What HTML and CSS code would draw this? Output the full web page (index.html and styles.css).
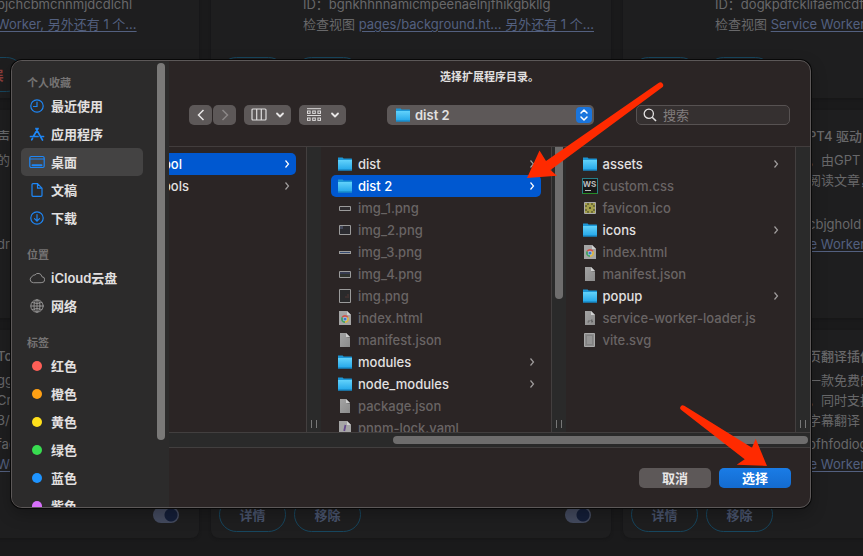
FILE: index.html
```html
<!DOCTYPE html>
<html lang="zh-CN">
<head>
<meta charset="utf-8">
<title>选择扩展程序目录</title>
<link rel="stylesheet" href="styles.css">
</head>
<body>
<svg class="defs" aria-hidden="true">
  <defs>
    <linearGradient id="blue" x1="0" y1="0" x2="0" y2="1"><stop offset="0" stop-color="#62d2fb"/><stop offset="1" stop-color="#27a9ea"/></linearGradient>
    <linearGradient id="paper" x1="0" y1="0" x2="1" y2="1"><stop offset="0" stop-color="#a3a3a3"/><stop offset="1" stop-color="#8b8b8b"/></linearGradient>
    <symbol id="folder" viewBox="0 0 16 16"><path d="M1 1.500h4.600l1 1H14.500a.5.5 0 0 1 .5.5v11.500H1z" fill="#1c96d6"/><path d="M1 4h14v9.500H1z" fill="url(#blue)"/><path d="M1 13.500h14v1H1z" fill="#1686c4"/></symbol>
    <symbol id="file" viewBox="0 0 16 16"><path d="M3 1h6l4 4v10H3z" fill="url(#paper)"/><path d="M9 1v4h4z" fill="#d0d0d0"/><path d="M9 5h4v1z" fill="#6d6d6d"/></symbol>
    <symbol id="yaml" viewBox="0 0 16 16"><path d="M2 1h8l4 4v10H2z" fill="#a5a5a5"/><path d="M10 1v4h4z" fill="#d0d0d0"/><path d="M8.500 5l-1.300 6M7 13v1" stroke="#65498d" stroke-width="1.800"/></symbol>
    <symbol id="js" viewBox="0 0 16 16"><path d="M3 1h6l4 4v10H3z" fill="url(#paper)"/><path d="M9 1v4h4z" fill="#d0d0d0"/><path d="M7 10v2H5.500M10.500 10H9v1h1.500v1H9" fill="none" stroke="#555" stroke-width=".7"/></symbol>
    <symbol id="html" viewBox="0 0 16 16"><path d="M2 1h8l4 4v10H2z" fill="#a5a5a5"/><path d="M10 1v4h4z" fill="#d0d0d0"/><path d="M8 9L4.540 7A4 4 0 0 1 11.460 7z" fill="#cf5347"/><path d="M8 9L4.540 7A4 4 0 0 0 8 13z" fill="#45a062"/><path d="M8 9l3.460-2A4 4 0 0 1 8 13z" fill="#d8b445"/><circle cx="8" cy="9" r="2.200" fill="#c3cddd"/><circle cx="8" cy="9" r="1.600" fill="#3d78c9"/></symbol>
    <symbol id="img1" viewBox="0 0 16 16"><path d="M2.500 6.500h11v4h-11z" fill="#2f2d30" stroke="#9b9b9b"/></symbol>
    <symbol id="img2" viewBox="0 0 16 16"><path d="M2.500 3.500h11v9h-11z" fill="#2b2b30" stroke="#9b9b9b"/><path d="M3 4h3v3H3z" fill="#454a5c"/></symbol>
    <symbol id="img3" viewBox="0 0 16 16"><path d="M2 7h12v3H2z" fill="#9b9b9b"/><path d="M3 8h10v1H3z" fill="#354a70"/></symbol>
    <symbol id="img4" viewBox="0 0 16 16"><path d="M2.500 5.500h11v6h-11z" fill="#2f332f" stroke="#9b9b9b"/><path d="M3 6h10v2H3z" fill="#363b50"/></symbol>
    <symbol id="img5" viewBox="0 0 16 16"><path d="M2.500 1.500h11v13h-11z" fill="#2a2a2b" stroke="#9b9b9b"/><path d="M11 6v4M8 9h2" stroke="#503735"/></symbol>
    <symbol id="ico" viewBox="0 0 16 16"><path d="M2.500 2.500h11v11h-11z" fill="#a3a04c" stroke="#aaa"/><path d="M3 6h2M3 10h2M11 6h2M11 10h2M6 3v2M10 3v2M6 11v2M10 11v2" stroke="#3c3b25"/><path d="M7 7h2v2H7z" fill="#55532c"/></symbol>
    <symbol id="vite" viewBox="0 0 16 16"><path d="M2.500 1.500h10v13h-10z" fill="#8b8b8b" stroke="#a9a9a9"/><path d="M4.500 3.500h6v9h-6z" fill="#949494" stroke="#777" stroke-width=".6"/></symbol>
    <symbol id="chev" viewBox="0 0 8 12"><path d="M2.500 2.500L5.500 6l-3 3.500" fill="none" stroke="currentColor" stroke-width="1.200"/></symbol>
    <symbol id="down" viewBox="0 0 10 8"><path d="M2 2.500l3 3 3-3" fill="none" stroke="currentColor" stroke-width="1.800" stroke-linecap="round" stroke-linejoin="round"/></symbol>
  </defs>
</svg>

<main class="board">
  <section class="card">
    <p class="cut">pjchcbmcnnmjdcdlchl</p>
    <p>检查视图 <a href="#">Service Worker, 另外还有 1 个...</a></p>
    <div class="actions"><button>详情</button><button>移除</button><button class="error">错误</button></div>
  </section>
  <section class="card">
    <p>ID：bgnkhhnnamicmpeenaelnjfhikgbkllg</p>
    <p>检查视图 <a href="#">pages/background.ht... 另外还有 1 个...</a></p>
    <div class="actions"><button>详情</button><button>移除</button></div>
  </section>
  <section class="card">
    <p>ID：dogkpdfcklifaemcdfl</p>
    <p>检查视图 <a href="#">Service Worker</a></p>
    <div class="actions"><button>详情</button><button>移除</button></div>
  </section>

  <section class="card">
    <h2 class="cut">声作</h2>
    <div class="about cut">的一</div>
    <p class="cut">dr</p>
    <div class="actions"><button>详情</button><button>移除</button></div>
  </section>
  <section class="card"></section>
  <section class="card">
    <h2 class="tail">PT4 驱动</h2>
    <div class="about tail">，由GPT<br>阅读文章，</div>
    <p class="tail">cbjghold</p>
    <p>检查视图 <a href="#">Service Worker</a></p>
    <div class="actions"></div>
  </section>

  <section class="card">
    <h2 class="cut">Too</h2>
    <div class="about cut">gg<br>Cr<br>3/2</div>
    <p class="cut">fac</p>
    <p class="cut"><a href="#">Wo</a></p>
    <div class="actions"><button>详情</button><button>移除</button><input class="switch" type="checkbox" checked aria-label="启用"></div>
  </section>
  <section class="card">
    <div class="actions"><button>详情</button><button>移除</button><input class="switch" type="checkbox" checked aria-label="启用"></div>
  </section>
  <section class="card">
    <h2 class="tail">页翻译插件</h2>
    <div class="about tail">一款免费的<br>，同时支持<br>字幕翻译</div>
    <p class="tail">pfhfodiog</p>
    <p>检查视图 <a href="#">Service Worker</a></p>
    <div class="actions"><button>详情</button><button>移除</button></div>
  </section>
</main>

<div class="backdrop">
  <div class="dialog" role="dialog" aria-labelledby="title">
    <aside class="sidebar">
      <nav class="places">
        <h3>个人收藏</h3>
        <a href="#"><svg viewBox="0 0 16 16"><circle cx="8" cy="8" r="6.200"/><path d="M8 4v4.500H4.500"/></svg>最近使用</a>
        <a href="#"><svg viewBox="0 0 16 16"><path d="M9 2.500L4.300 10.500M7 2.500l5.500 9.800 1 1.700M1.500 10.500h7.500M11.500 10.500h3M3.500 12.500l-.8 1.300" stroke-width="1.700"/></svg>应用程序</a>
        <a class="current" href="#"><svg viewBox="0 0 16 16"><rect x=".8" y="2.500" width="14.400" height="11" rx="1.500"/><path d="M1 5h14"/><path d="M3.500 11.200h9" stroke-width="2"/></svg>桌面</a>
        <a href="#"><svg viewBox="0 0 16 16"><path d="M4 1.700h4.500L13 6.200v7.100a1 1 0 0 1-1 1H4a1 1 0 0 1-1-1V2.700a1 1 0 0 1 1-1zM8.500 2v4.200h4.300"/></svg>文稿</a>
        <a href="#"><svg viewBox="0 0 16 16"><circle cx="8" cy="8" r="6.200"/><path d="M8 4.500v6.500M5.500 8.700L8 11.200l2.500-2.500"/></svg>下载</a>
        <h3>位置</h3>
        <a class="gray" href="#"><svg viewBox="0 0 16 16"><path d="M4 12.700a3.200 3.200 0 0 1-.7-6.200A2.300 2.300 0 0 1 6 5a3.800 3.800 0 0 1 6.900 1.700A3 3 0 0 1 12.500 12.700z"/></svg>iCloud云盘</a>
        <a class="gray" href="#"><svg viewBox="0 0 16 16"><circle cx="8" cy="8" r="6.200"/><ellipse cx="8" cy="8" rx="3" ry="6.200"/><path d="M8 2v12M2 8h12M3.200 4.600q4.800 2 9.600 0M3.200 11.400q4.800-2 9.600 0"/></svg>网络</a>
        <h3>标签</h3>
        <a href="#"><i class="dot red"></i>红色</a>
        <a href="#"><i class="dot orange"></i>橙色</a>
        <a href="#"><i class="dot yellow"></i>黄色</a>
        <a href="#"><i class="dot green"></i>绿色</a>
        <a href="#"><i class="dot blue"></i>蓝色</a>
        <a href="#"><i class="dot purple"></i>紫色</a>
      </nav>
      <div class="track"><div class="thumb"></div></div>
    </aside>

    <div class="content">
      <header>
        <h1 id="title">选择扩展程序目录。</h1>
        <div class="toolbar">
          <div class="pair">
            <button aria-label="后退"><svg width="10" height="14" viewBox="0 0 10 14"><path d="M7.500 2L2.500 7l5 5" fill="none" stroke="#e8e6e6" stroke-width="1.500"/></svg></button>
            <button aria-label="前进"><svg width="10" height="14" viewBox="0 0 10 14"><path d="M2.500 2l5 5-5 5" fill="none" stroke="#8b8787" stroke-width="1.500"/></svg></button>
          </div>
          <button class="view" aria-label="分栏视图"><svg width="16" height="14" viewBox="0 0 16 14"><rect x="1" y="1" width="14" height="11" rx="1" fill="none" stroke="#dedcdc" stroke-width="1.200"/><path d="M5.700 1v11M10.300 1v11" stroke="#dedcdc" stroke-width="1.200"/></svg><svg width="10" height="8"><use href="#down"/></svg></button>
          <button class="view" aria-label="分组"><svg width="16" height="14" viewBox="0 0 16 14" fill="none" stroke="#dedcdc"><path d="M1 .7h14M1 7.500h14"/><rect x="1.500" y="3" width="2.600" height="2.400"/><rect x="6.700" y="3" width="2.600" height="2.400"/><rect x="11.900" y="3" width="2.600" height="2.400"/><rect x="1.500" y="10" width="2.600" height="2.400"/><rect x="6.700" y="10" width="2.600" height="2.400"/><rect x="11.900" y="10" width="2.600" height="2.400"/></svg><svg width="10" height="8"><use href="#down"/></svg></button>
          <div class="folder-select">
            <svg class="lead" width="16" height="16"><use href="#folder"/></svg>
            <select aria-label="当前文件夹"><option>dist 2</option></select>
            <span class="stepper"><svg width="10" height="14" viewBox="0 0 10 14"><path d="M2 5l3-3 3 3M2 9l3 3 3-3" fill="none" stroke="#fff" stroke-width="1.500" stroke-linecap="round" stroke-linejoin="round"/></svg></span>
          </div>
          <label class="search"><svg width="14" height="14" viewBox="0 0 14 14"><circle cx="5.800" cy="5.800" r="4.600" fill="none" stroke="#e2e0e0" stroke-width="1.300"/><path d="M9.200 9.200L13 13" stroke="#e2e0e0" stroke-width="1.600"/></svg><input type="text" placeholder="搜索" aria-label="搜索"></label>
        </div>
      </header>

      <div class="columns">
        <ul class="column first">
          <li class="selected"><span>ool</span><svg class="chev"><use href="#chev"/></svg></li>
          <li><span>ools</span><svg class="chev"><use href="#chev"/></svg></li>
        </ul>
        <div class="gutter"><i class="grip"></i></div>
        <ul class="column">
          <li><svg><use href="#folder"/></svg><span>dist</span><svg class="chev"><use href="#chev"/></svg></li>
          <li class="selected"><svg><use href="#folder"/></svg><span>dist 2</span><svg class="chev"><use href="#chev"/></svg></li>
          <li class="off"><svg><use href="#img1"/></svg><span>img_1.png</span></li>
          <li class="off"><svg><use href="#img2"/></svg><span>img_2.png</span></li>
          <li class="off"><svg><use href="#img3"/></svg><span>img_3.png</span></li>
          <li class="off"><svg><use href="#img4"/></svg><span>img_4.png</span></li>
          <li class="off"><svg><use href="#img5"/></svg><span>img.png</span></li>
          <li class="off"><svg><use href="#html"/></svg><span>index.html</span></li>
          <li class="off"><svg><use href="#file"/></svg><span>manifest.json</span></li>
          <li><svg><use href="#folder"/></svg><span>modules</span><svg class="chev"><use href="#chev"/></svg></li>
          <li><svg><use href="#folder"/></svg><span>node_modules</span><svg class="chev"><use href="#chev"/></svg></li>
          <li class="off"><svg><use href="#file"/></svg><span>package.json</span></li>
          <li class="off"><svg><use href="#yaml"/></svg><span>pnpm-lock.yaml</span></li>
        </ul>
        <div class="gutter"><div class="thumb"></div><i class="grip"></i></div>
        <ul class="column">
          <li><svg><use href="#folder"/></svg><span>assets</span><svg class="chev"><use href="#chev"/></svg></li>
          <li class="off"><b class="ws">WS</b><span>custom.css</span></li>
          <li class="off"><svg><use href="#ico"/></svg><span>favicon.ico</span></li>
          <li><svg><use href="#folder"/></svg><span>icons</span><svg class="chev"><use href="#chev"/></svg></li>
          <li class="off"><svg><use href="#html"/></svg><span>index.html</span></li>
          <li class="off"><svg><use href="#file"/></svg><span>manifest.json</span></li>
          <li><svg><use href="#folder"/></svg><span>popup</span><svg class="chev"><use href="#chev"/></svg></li>
          <li class="off"><svg><use href="#js"/></svg><span>service-worker-loader.js</span></li>
          <li class="off"><svg><use href="#vite"/></svg><span>vite.svg</span></li>
        </ul>
        <div class="gutter"><i class="grip"></i></div>
      </div>
      <div class="hscroll"><div class="thumb"></div></div>
      <footer><button>取消</button><button class="primary">选择</button></footer>
    </div>
  </div>
</div>

<svg class="arrows" width="863" height="556" viewBox="0 0 863 556" fill="#ff2a00" aria-hidden="true">
  <path d="M527 178L539.500 150.500 546 161 658.500 83A2.800 2.800 0 0 1 662 87.600L550.500 170 557 175.800z"/>
  <path d="M767 466L755.700 438.700 752 447.700 684.300 405.800A2.500 2.500 0 0 0 681.300 410L744.700 459.300 736.700 464.700z"/>
</svg>
</body>
</html>
```
FILE: styles.css
```css
* { box-sizing: border-box; margin: 0; padding: 0; }

body {
  height: 100vh;
  overflow: hidden;
  background: #1a1a1b;
  font: 13px/20px Inter, "Noto Sans CJK SC", sans-serif;
}

button, input, select { font: inherit; border: 0; }
ul { list-style: none; }
.defs { position: absolute; width: 0; height: 0; }

/* extension cards */
.board {
  display: grid;
  grid-template-columns: repeat(3, 400px);
  grid-auto-rows: 208px;
  gap: 12px;
  margin: -110px 0 0 -201px;
  color: #68686a;
}
.card {
  display: flex;
  flex-direction: column;
  padding: 16px 8px 6px 92px;
  border-radius: 8px;
  background: #1e1e1f;
  box-shadow: 0 1px 3px #161617;
  white-space: nowrap;
  overflow: hidden;
}
.card h2 { font-size: 13px; font-weight: 500; line-height: 20px; }
.card .about { margin-top: 4px; flex: 1; }
.card p:first-child { margin-top: auto; }
.card a { color: #53607f; text-underline-offset: 2px; }
.cut { padding-left: 106px; }
.tail { padding-left: 93px; }
.actions {
  display: flex;
  align-items: center;
  gap: 8px;
  height: 35px;
  margin: 23px 0 0 -84px;
}
.card > .actions:first-child { margin-top: auto; }
.actions button {
  width: 67px;
  height: 35px;
  border: 1px solid #17465e;
  border-radius: 18px;
  background: none;
  color: #48536c;
  font-weight: 600;
}
.actions .error { color: #8a3d3a; }
.switch {
  appearance: none;
  width: 26px;
  height: 16px;
  margin: 0 12px 0 auto;
  border-radius: 8px;
  background: radial-gradient(circle at 18px 8px, #141e38 6px, #434a5e 7px);
}

/* open panel */
.backdrop {
  position: absolute;
  inset: 0;
  padding: 60px 52px 48px 11px;
}
.dialog {
  display: flex;
  height: 100%;
  border: 1px solid #5c5858;
  border-radius: 11px;
  background: #2b2525;
  box-shadow: 0 0 0 1px #080808, 0 6px 16px #0004;
  overflow: hidden;
  color: #e2e0e0;
  font-weight: 500;
}
.sidebar {
  display: flex;
  width: 157px;
  flex: none;
  background: #2c2b2b;
  overflow: hidden;
}
.places { flex: 1; padding: 13px 14px 0 9px; }
.places h3 {
  padding: 0 6px;
  color: #757373;
  font-size: 11px;
  font-weight: 600;
  line-height: 18px;
}
.places a + h3 { padding-top: 14px; }
.places a {
  display: flex;
  align-items: center;
  gap: 6px;
  height: 28px;
  padding: 0 8px;
  border-radius: 5px;
  color: inherit;
  font-weight: 600;
  text-decoration: none;
  white-space: nowrap;
}
.places .current { background: #444343; }
.places svg {
  width: 16px;
  height: 16px;
  fill: none;
  stroke: #1e86f5;
  stroke-width: 1.200;
  stroke-linecap: round;
}
.places .gray svg { stroke: #929191; stroke-width: 1; }
.dot { width: 10px; height: 10px; margin: 0 3px; border-radius: 50%; }
.red { background: #ff5f57; }
.orange { background: #ffa014; }
.yellow { background: #ffe01b; }
.green { background: #38dc50; }
.blue { background: #1e94ff; }
.purple { background: #d770fb; }

.thumb { border-radius: 4px; background: #6e6d6d; }
.track { width: 12px; padding-top: 2px; }
.track .thumb { width: 8px; height: 85%; background: #7a7978; }

.content { display: flex; flex: 1; min-width: 0; flex-direction: column; }
header { border-bottom: 1px solid #423d3d; }
h1 { padding-top: 6px; font-size: 11px; font-weight: 700; line-height: 20px; text-align: center; }
.toolbar {
  display: flex;
  align-items: center;
  gap: 8px;
  padding: 18px 20px 21px;
}
.toolbar button {
  display: flex;
  align-items: center;
  justify-content: center;
  width: 23px;
  height: 20px;
  border-radius: 5px;
  background: #5d5858;
  color: #e8e6e6;
}
.pair { display: flex; gap: 1px; }
.toolbar .view { width: 47px; gap: 8px; }
.folder-select {
  position: relative;
  width: 207px;
  margin: 0 34px 0 33px;
}
.folder-select select {
  display: block;
  appearance: none;
  width: 100%;
  height: 20px;
  padding: 0 24px 0 28px;
  border-radius: 5px;
  background: #5d5858;
  color: #e2e0e0;
  font-weight: 600;
}
.lead { position: absolute; top: 2px; left: 8px; }
.stepper {
  position: absolute;
  top: 2px;
  right: 2px;
  display: flex;
  align-items: center;
  justify-content: center;
  width: 16px;
  height: 16px;
  border-radius: 4px;
  background: #1a75dd;
  pointer-events: none;
}
.search {
  display: flex;
  align-items: center;
  flex: 1;
  gap: 6px;
  height: 20px;
  padding: 0 6px;
  border: 1px solid #575252;
  border-radius: 5px;
  background: #353030;
}
.search svg { flex: none; }
.search input { min-width: 0; width: 100%; background: none; color: inherit; outline: 0; }
.search input::placeholder { color: #827e7e; opacity: 1; font-weight: 400; }

.columns { display: flex; flex: 1; min-height: 0; overflow: hidden; }
.column { flex: 1 1 230px; min-width: 0; padding: 6px 10px 0; overflow: hidden; }
.column.first { flex: 0 0 137px; padding-left: 0; }
.column li {
  display: flex;
  align-items: center;
  gap: 5px;
  height: 22px;
  padding: 0 5px 0 6px;
  border-radius: 5px;
  white-space: nowrap;
}
.column.first li { margin-left: -12px; }
.column li svg { width: 16px; height: 16px; flex: none; }
.column li .chev { width: 8px; height: 12px; margin-left: auto; color: #a09d9d; }
.column .selected { background: #0058d0; color: #fff; }
.column .selected .chev { color: #fff; }
.column .off { color: #696464; }
.ws {
  width: 16px;
  height: 16px;
  border: 1px solid #277e88;
  border-bottom-color: #258b25;
  background: linear-gradient(#bbb, #bbb) 2px 11px / 6px 1px no-repeat #171717;
  color: #bbb;
  font-size: 8px;
  line-height: 10px;
  text-align: center;
}
.gutter {
  display: flex;
  flex-direction: column;
  flex: none;
  width: 15px;
  padding: 0 3px 4px;
  border-left: 1px solid #433f3f;
  background: #2a2a2a;
}
.gutter .thumb { width: 8px; height: 152px; border-radius: 0 0 4px 4px; }
.grip {
  width: 6px;
  height: 8px;
  margin: auto 0 0 1px;
  border: solid #777;
  border-width: 0 1px;
}
.hscroll {
  height: 16px;
  padding: 3px 2px 3px 224px;
  border: solid #423f3f;
  border-width: 1px 0;
  background: #2a2a2a;
}
.hscroll .thumb { height: 8px; }
footer { display: flex; justify-content: flex-end; gap: 8px; padding: 20px 19px 19px; }
footer button {
  width: 72px;
  height: 20px;
  border-radius: 5px;
  background: #5d5858;
  color: #e8e6e6;
  font-weight: 600;
  line-height: 18px;
}
footer .primary { background: linear-gradient(#1a7ce6, #146bcf); color: #fff; }

.arrows { position: absolute; top: 0; left: 0; pointer-events: none; }
```
